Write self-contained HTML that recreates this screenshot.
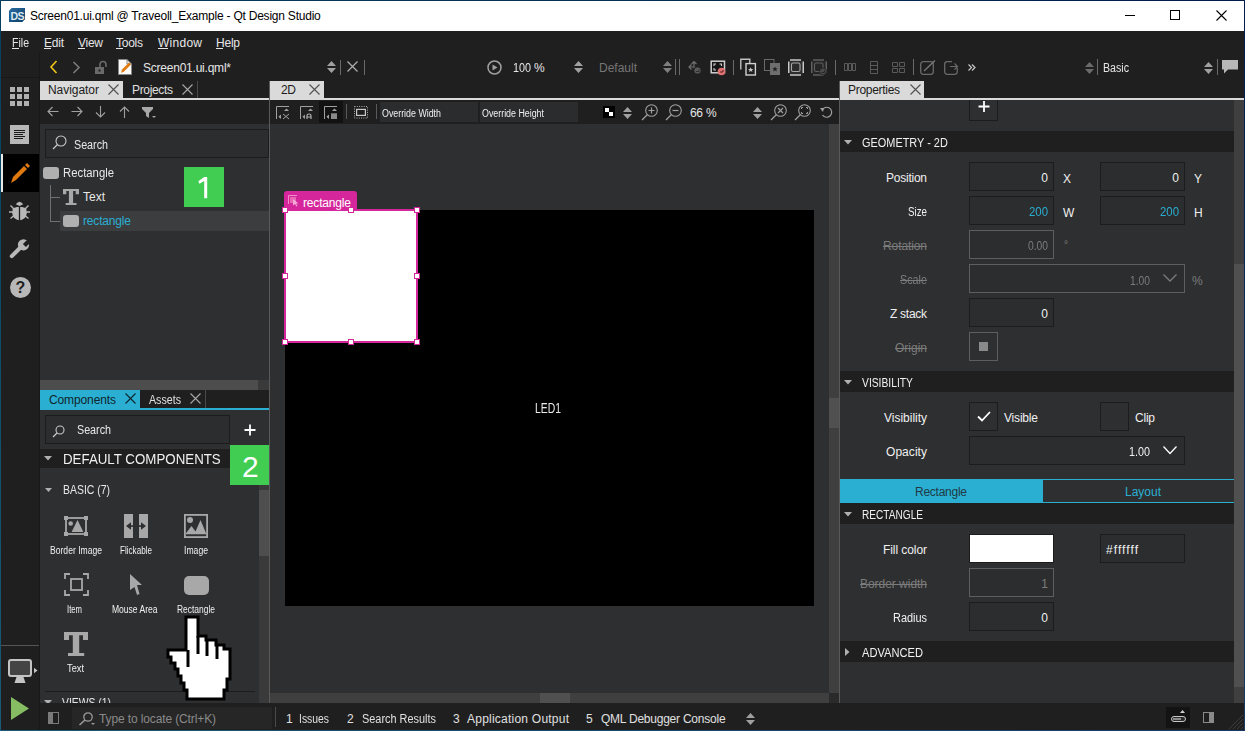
<!DOCTYPE html>
<html><head><meta charset="utf-8">
<style>
*{margin:0;padding:0;box-sizing:border-box}
html,body{width:1245px;height:731px;overflow:hidden;background:#1f1f1f}
body{position:relative;font-family:"Liberation Sans",sans-serif;font-size:12px;color:#fff}
.a{position:absolute}
.t{position:absolute;white-space:nowrap;line-height:1;font-family:"Liberation Sans",sans-serif}
svg.a{overflow:visible}
</style></head><body>
<div class="a" style="left:0px;top:0px;width:1245px;height:1px;background:linear-gradient(to right,#053f5f,#001c4c);"></div>
<div class="a" style="left:0px;top:730px;width:1245px;height:1px;background:linear-gradient(to right,#185a78,#1a3a66);"></div>
<div class="a" style="left:0px;top:0px;width:1px;height:731px;background:linear-gradient(#053f5f,#185a78);"></div>
<div class="a" style="left:1244px;top:0px;width:1px;height:731px;background:linear-gradient(#001c4c,#1a3a66);"></div>
<div class="a" style="left:1px;top:1px;width:1243px;height:30px;background:#ffffff;"></div>
<div class="a" style="left:1px;top:31px;width:1243px;height:672px;background:#1f1f1f;"></div>
<div class="a" style="left:1px;top:703px;width:1243px;height:27px;background:#1f1f1f;"></div>
<svg class="a" style="left:9px;top:8px;" width="17" height="14" viewBox="0 0 17 14"><path d="M3 0H16V11L13 14H0V3Z" fill="#1a5a8c"/><path d="M3 0H16V11L13 14H0V3Z" fill="url(#g1)"/><defs><linearGradient id="g1" x1="0" y1="0" x2="1" y2="1"><stop offset="0" stop-color="#2a6da0"/><stop offset="1" stop-color="#0d3f66"/></linearGradient></defs><text x="1.5" y="12" font-family="Liberation Sans" font-weight="bold" font-size="10.5" fill="#dbe8f2" letter-spacing="-0.6">DS</text></svg>
<div class="t" style="left:30.0px;top:10px;font-size:12px;color:#000;font-weight:normal;letter-spacing:-0.222px;">Screen01.ui.qml @ Traveoll_Example - Qt Design Studio</div>
<div class="a" style="left:1125px;top:15px;width:10px;height:1px;background:#000;"></div>
<div class="a" style="left:1170px;top:10px;width:10px;height:10px;border:1px solid #000;background:transparent;"></div>
<svg class="a" style="left:1216px;top:10px;" width="11" height="11" viewBox="0 0 11 11"><path d="M0.5 0.5L10.5 10.5M10.5 0.5L0.5 10.5" stroke="#000" stroke-width="1.1"/></svg>
<div class="t" style="left:12.0px;top:37px;font-size:12px;color:#e6e6e6;font-weight:normal;letter-spacing:0.000px;transform:scaleX(0.8792);transform-origin:0 0;">File</div>
<div class="a" style="left:12px;top:48px;width:7px;height:1px;background:#e6e6e6;"></div>
<div class="t" style="left:44.0px;top:37px;font-size:12px;color:#e6e6e6;font-weight:normal;letter-spacing:-0.226px;">Edit</div>
<div class="a" style="left:44px;top:48px;width:7px;height:1px;background:#e6e6e6;"></div>
<div class="t" style="left:78.0px;top:37px;font-size:12px;color:#e6e6e6;font-weight:normal;letter-spacing:-0.264px;">View</div>
<div class="a" style="left:78px;top:48px;width:7px;height:1px;background:#e6e6e6;"></div>
<div class="t" style="left:116.0px;top:37px;font-size:12px;color:#e6e6e6;font-weight:normal;letter-spacing:-0.253px;">Tools</div>
<div class="a" style="left:116px;top:48px;width:7px;height:1px;background:#e6e6e6;"></div>
<div class="t" style="left:158.0px;top:37px;font-size:12px;color:#e6e6e6;font-weight:normal;letter-spacing:0.264px;">Window</div>
<div class="a" style="left:158px;top:48px;width:10px;height:1px;background:#e6e6e6;"></div>
<div class="t" style="left:216.0px;top:37px;font-size:12px;color:#e6e6e6;font-weight:normal;letter-spacing:-0.227px;">Help</div>
<div class="a" style="left:216px;top:48px;width:7px;height:1px;background:#e6e6e6;"></div>
<div class="a" style="left:39px;top:53px;width:1px;height:677px;background:#181818;"></div>
<div class="a" style="left:1px;top:77px;width:38px;height:1px;background:#181818;"></div>
<div class="a" style="left:10px;top:87px;width:5px;height:5px;background:#b0b0b0;"></div>
<div class="a" style="left:17px;top:87px;width:5px;height:5px;background:#b0b0b0;"></div>
<div class="a" style="left:24px;top:87px;width:5px;height:5px;background:#b0b0b0;"></div>
<div class="a" style="left:10px;top:94px;width:5px;height:5px;background:#b0b0b0;"></div>
<div class="a" style="left:17px;top:94px;width:5px;height:5px;background:#b0b0b0;"></div>
<div class="a" style="left:24px;top:94px;width:5px;height:5px;background:#b0b0b0;"></div>
<div class="a" style="left:10px;top:101px;width:5px;height:5px;background:#b0b0b0;"></div>
<div class="a" style="left:17px;top:101px;width:5px;height:5px;background:#b0b0b0;"></div>
<div class="a" style="left:24px;top:101px;width:5px;height:5px;background:#b0b0b0;"></div>
<div class="a" style="left:10px;top:125px;width:19px;height:19px;background:#b8b8b8;"></div>
<div class="a" style="left:14px;top:130px;width:11px;height:1px;background:#1a1a1a;"></div>
<div class="a" style="left:14px;top:132px;width:11px;height:1px;background:#1a1a1a;"></div>
<div class="a" style="left:14px;top:134px;width:9px;height:1px;background:#1a1a1a;"></div>
<div class="a" style="left:14px;top:136px;width:11px;height:1px;background:#1a1a1a;"></div>
<div class="a" style="left:14px;top:138px;width:9px;height:1px;background:#1a1a1a;"></div>
<div class="a" style="left:1px;top:154px;width:38px;height:38px;background:#000;"></div>
<div class="a" style="left:1px;top:154px;width:2px;height:38px;background:#e8e8e8;"></div>
<svg class="a" style="left:9px;top:162px;" width="21" height="22" viewBox="0 0 21 22"><path d="M2 21 L4 15 L15 4 L18 7 L7 18 Z" fill="#e07a10"/><path d="M16 3 L18 1 L21 4 L19 6Z" fill="#e07a10"/></svg>
<svg class="a" style="left:9px;top:200px;" width="21" height="21" viewBox="0 0 21 21"><path d="M1.5 5.5L4.5 8.5M19.5 5.5L16.5 8.5M0 12H4M21 12H17M1.5 18.5L4.5 16M19.5 18.5L16.5 16" stroke="#b8b8b8" stroke-width="1.4"/><path d="M10.5 6.3L3.8 8.2Q2.6 13 4 16.5Q7 20.3 10.5 20.3Q14 20.3 17 16.5Q18.4 13 17.2 8.2Z" fill="#b8b8b8"/><path d="M6.8 4.3Q10.5 -0.8 14.2 4.3L10.5 6Z" fill="#b8b8b8"/><path d="M10.5 6.2V21" stroke="#1f1f1f" stroke-width="1.3"/><path d="M5.5 6.3L10.5 6.6L15.5 6.3" fill="none" stroke="#1f1f1f" stroke-width="0.9"/></svg>
<svg class="a" style="left:9px;top:239px;" width="21" height="20" viewBox="0 0 21 20"><defs><mask id="wm"><rect x="-2" y="-2" width="25" height="24" fill="#fff"/><path d="M13.9 5.1L16.9 8.1L22.5 2.5L19.5 -0.5Z" fill="#000"/></mask></defs><g mask="url(#wm)"><circle cx="14.5" cy="5.8" r="5.6" fill="#b8b8b8"/></g><path d="M2.8 17.2L11.5 8.5" stroke="#b8b8b8" stroke-width="4" stroke-linecap="round"/></svg>
<svg class="a" style="left:10px;top:277px;" width="21" height="21" viewBox="0 0 21 21"><circle cx="10.5" cy="10.5" r="10.5" fill="#b8b8b8"/><text x="10.5" y="16" text-anchor="middle" font-family="Liberation Sans" font-weight="bold" font-size="16" fill="#1f1f1f">?</text></svg>
<div class="a" style="left:1px;top:645px;width:38px;height:1px;background:#555;"></div>
<svg class="a" style="left:8px;top:659px;" width="31" height="25" viewBox="0 0 31 25"><rect x="1" y="1" width="22" height="16" rx="2" fill="#444" stroke="#c4c4c4" stroke-width="2"/><path d="M6.5 24L8.5 18H15.5L17.5 24Z" fill="#c4c4c4"/><path d="M26 8.8L29.5 11.5L26 14.3Z" fill="#c4c4c4"/></svg>
<svg class="a" style="left:10px;top:697px;" width="20" height="23" viewBox="0 0 20 23"><path d="M1 0 L19 11.5 L1 23Z" fill="#86bd63"/></svg>
<svg class="a" style="left:49px;top:60px;" width="9" height="14" viewBox="0 0 9 14"><path d="M7.5 1 L2 7 L7.5 13" fill="none" stroke="#f0c419" stroke-width="1.6"/></svg>
<svg class="a" style="left:72px;top:61px;" width="9" height="13" viewBox="0 0 9 13"><path d="M1.5 1 L7 6.5 L1.5 12" fill="none" stroke="#7a7a7a" stroke-width="1.6"/></svg>
<svg class="a" style="left:95px;top:61px;" width="14" height="13" viewBox="0 0 14 13"><rect x="0" y="6" width="9" height="7" fill="#6a6a6a"/><path d="M5 6V3.5A3 3 0 0 1 11 3.5V6" fill="none" stroke="#6a6a6a" stroke-width="1.6"/><rect x="3.5" y="8.5" width="2" height="2" fill="#1f1f1f"/></svg>
<svg class="a" style="left:118px;top:59px;" width="15" height="16" viewBox="0 0 15 16"><path d="M0.5 0.5H9L13.5 5V15.5H0.5Z" fill="#fafafa" stroke="#888" stroke-width="1"/><path d="M9 0.5V5H13.5" fill="none" stroke="#888"/><path d="M3 14 L4 10.5 L11 3.5 L13 5.5 L6 12.5Z" fill="#e07a10"/></svg>
<div class="t" style="left:143.0px;top:62px;font-size:12px;color:#e6e6e6;font-weight:normal;letter-spacing:-0.226px;">Screen01.ui.qml*</div>
<svg class="a" style="left:327px;top:61px;" width="9" height="12" viewBox="0 0 9 12"><path d="M4.5 0 L9 5 H0Z M4.5 12 L9 7 H0Z" fill="#a0a0a0"/></svg>
<div class="a" style="left:340px;top:60px;width:1px;height:15px;background:#6a6a6a;"></div>
<svg class="a" style="left:347px;top:61px;" width="11" height="11" viewBox="0 0 11 11"><path d="M0.5 0.5L10.5 10.5M10.5 0.5L0.5 10.5" stroke="#b0b0b0" stroke-width="1.2"/></svg>
<div class="a" style="left:364px;top:60px;width:1px;height:15px;background:#6a6a6a;"></div>
<svg class="a" style="left:487px;top:60px;" width="15" height="15" viewBox="0 0 15 15"><circle cx="7.5" cy="7.5" r="6.5" fill="none" stroke="#a0a0a0" stroke-width="1.5"/><path d="M5.5 4.5 L10.5 7.5 L5.5 10.5Z" fill="#a0a0a0"/></svg>
<div class="t" style="left:513.0px;top:62px;font-size:12px;color:#e6e6e6;font-weight:normal;letter-spacing:0.000px;transform:scaleX(0.8990);transform-origin:0 0;">100</div>
<div class="t" style="left:534.0px;top:62px;font-size:12px;color:#e6e6e6;font-weight:normal;letter-spacing:-1.670px;">%</div>
<svg class="a" style="left:574px;top:61px;" width="9" height="12" viewBox="0 0 9 12"><path d="M4.5 0 L9 5 H0Z M4.5 12 L9 7 H0Z" fill="#a0a0a0"/></svg>
<div class="t" style="left:599.0px;top:62px;font-size:12px;color:#767676;font-weight:normal;letter-spacing:-0.004px;">Default</div>
<svg class="a" style="left:663px;top:61px;" width="9" height="12" viewBox="0 0 9 12"><path d="M4.5 0 L9 5 H0Z M4.5 12 L9 7 H0Z" fill="#808080"/></svg>
<div class="a" style="left:675px;top:59px;width:1px;height:16px;background:#6a6a6a;"></div>
<div class="a" style="left:679px;top:59px;width:1px;height:16px;background:#6a6a6a;"></div>
<svg class="a" style="left:688px;top:60px;" width="14" height="15" viewBox="0 0 14 15"><path d="M6 8V1.5M3.5 4L6 1.5L8.5 4M5.5 7H1M3.5 4.5L1 7L3.5 9.5" fill="none" stroke="#6e6e6e" stroke-width="1.2"/><circle cx="9.5" cy="10.5" r="3.6" fill="#5a5a5a" stroke="#1f1f1f" stroke-width="0.8"/><path d="M8 11.5H11V9.5" fill="none" stroke="#2a2a2a" stroke-width="0.9"/></svg>
<svg class="a" style="left:710px;top:60px;" width="16" height="16" viewBox="0 0 16 16"><rect x="1.2" y="1.2" width="13.3" height="11.6" fill="#161616" stroke="#d0d0d0" stroke-width="1.5"/><path d="M4 6V4H6M9.5 4H11.5V6M4 8V10H6" fill="none" stroke="#d0d0d0" stroke-width="1.1"/><circle cx="11.5" cy="11.5" r="3.8" fill="#e07272"/><path d="M10 12H13V10" fill="none" stroke="#5a2020" stroke-width="1"/></svg>
<div class="a" style="left:733px;top:60px;width:1px;height:15px;background:#6a6a6a;"></div>
<svg class="a" style="left:740px;top:58px;" width="17" height="18" viewBox="0 0 17 18"><path d="M0.8 11.5V1.2H9.8V5" fill="none" stroke="#c0c0c0" stroke-width="1.4"/><rect x="6" y="5.6" width="9.4" height="11.4" fill="#1f1f1f" stroke="#d0d0d0" stroke-width="1.4"/><path d="M10.7 9.2l.8 1.8h1.9l-1.5 1.2.6 1.9-1.8-1.1-1.8 1.1.6-1.9-1.5-1.2h1.9z" fill="#c8c8c8"/></svg>
<svg class="a" style="left:764px;top:58px;" width="17" height="18" viewBox="0 0 17 18"><rect x="0.5" y="1.5" width="9.5" height="11" fill="none" stroke="#6a6a6a"/><rect x="6" y="5" width="10" height="12" fill="#6e6e6e"/><path d="M11 8.5l.8 1.8h1.9l-1.5 1.2.6 1.9-1.8-1.1-1.8 1.1.6-1.9-1.5-1.2h1.9z" fill="#1f1f1f"/></svg>
<svg class="a" style="left:788px;top:59px;" width="16" height="17" viewBox="0 0 16 17"><rect x="1.5" y="1.5" width="13" height="14" fill="#2e2e2e"/><path d="M2 1H13M2 16H13M0.75 2.5V14M15.25 2.5V14" stroke="#c8c8c8" stroke-width="1.5"/><rect x="3.5" y="4" width="8.5" height="8.5" rx="1.5" fill="#2a2a2a" stroke="#a8a8a8" stroke-width="1.1"/></svg>
<svg class="a" style="left:811px;top:59px;" width="17" height="17" viewBox="0 0 17 17"><rect x="1.5" y="1.5" width="13" height="14" fill="#262626"/><path d="M2 1H13M2 16H13M0.75 2.5V14M15.25 2.5V14" stroke="#606060" stroke-width="1.5"/><rect x="3.5" y="4" width="8.5" height="8.5" rx="1.5" fill="none" stroke="#606060" stroke-width="1.1"/><circle cx="12" cy="12.5" r="3.6" fill="#4a4a4a" stroke="#1f1f1f" stroke-width="0.8"/><path d="M10.5 13.5H13.5V11.5" fill="none" stroke="#222" stroke-width="0.9"/></svg>
<div class="a" style="left:835px;top:60px;width:1px;height:15px;background:#6a6a6a;"></div>
<svg class="a" style="left:844px;top:63px;" width="13" height="8" viewBox="0 0 13 8"><path d="M0.5 0.5h3v7h-3zM4.5 0.5h3v7h-3zM8.5 0.5h3v7h-3z" fill="none" stroke="#5a5a5a"/></svg>
<svg class="a" style="left:870px;top:61px;" width="8" height="13" viewBox="0 0 8 13"><path d="M0.5 0.5h7v12h-7zM0.5 4.5h7M0.5 8.5h7" fill="none" stroke="#5a5a5a"/></svg>
<svg class="a" style="left:892px;top:62px;" width="13" height="11" viewBox="0 0 13 11"><path d="M0.5 0.5h5v4h-5zM7.5 0.5h5v4h-5zM0.5 6.5h5v4h-5zM7.5 6.5h5v4h-5z" fill="none" stroke="#5a5a5a"/></svg>
<div class="a" style="left:913px;top:59px;width:1px;height:16px;background:#6a6a6a;"></div>
<svg class="a" style="left:920px;top:60px;" width="16" height="15" viewBox="0 0 16 15"><rect x="0.7" y="1.7" width="12.6" height="12.6" rx="2.5" fill="none" stroke="#6a6a6a" stroke-width="1.3"/><path d="M4 11L15 0.5" stroke="#7a7a7a" stroke-width="1.3"/></svg>
<svg class="a" style="left:944px;top:60px;" width="15" height="15" viewBox="0 0 15 15"><path d="M8 1.7H3.2A2.5 2.5 0 0 0 0.7 4.2V11.8A2.5 2.5 0 0 0 3.2 14.3H10.8A2.5 2.5 0 0 0 13.3 11.8V8" fill="none" stroke="#6a6a6a" stroke-width="1.3"/><path d="M6 6.5H13M10.5 3.5L13.5 6.5L10.5 9.5" fill="none" stroke="#6a6a6a" stroke-width="1.2"/></svg>
<svg class="a" style="left:968px;top:64px;" width="8" height="8" viewBox="0 0 8 8"><path d="M0.5 0.5L3.5 3.5L0.5 6.5M4 0.5L7 3.5L4 6.5" fill="none" stroke="#c8c8c8" stroke-width="1.2"/></svg>
<svg class="a" style="left:1085px;top:62px;" width="9" height="12" viewBox="0 0 9 12"><path d="M4.5 0 L9 5 H0Z M4.5 12 L9 7 H0Z" fill="#6a6a6a"/></svg>
<div class="a" style="left:1097px;top:59px;width:1px;height:16px;background:#6a6a6a;"></div>
<div class="t" style="left:1103.0px;top:62px;font-size:12px;color:#e6e6e6;font-weight:normal;letter-spacing:0.000px;transform:scaleX(0.8860);transform-origin:0 0;">Basic</div>
<svg class="a" style="left:1204px;top:62px;" width="9" height="12" viewBox="0 0 9 12"><path d="M4.5 0 L9 5 H0Z M4.5 12 L9 7 H0Z" fill="#a0a0a0"/></svg>
<div class="a" style="left:1217px;top:59px;width:1px;height:16px;background:#6a6a6a;"></div>
<svg class="a" style="left:1222px;top:60px;" width="17" height="14" viewBox="0 0 17 14"><path d="M0 0H16V9.5H6L2 13.5V9.5H0Z" fill="#b8b8b8"/></svg>
<div class="a" style="left:40px;top:81px;width:83px;height:17px;background:#dadada;"></div>
<div class="t" style="left:48.0px;top:84px;font-size:12px;color:#1a1a1a;font-weight:normal;letter-spacing:-0.045px;">Navigator</div>
<svg class="a" style="left:108px;top:84px;" width="11" height="11" viewBox="0 0 11 11"><path d="M0.5 0.5L10.5 10.5M10.5 0.5L0.5 10.5" stroke="#505050" stroke-width="1.1"/></svg>
<div class="t" style="left:132.0px;top:84px;font-size:12px;color:#e0e0e0;font-weight:normal;letter-spacing:-0.335px;">Projects</div>
<svg class="a" style="left:182px;top:84px;" width="11" height="11" viewBox="0 0 11 11"><path d="M0.5 0.5L10.5 10.5M10.5 0.5L0.5 10.5" stroke="#a8a8a8" stroke-width="1.1"/></svg>
<div class="a" style="left:197px;top:81px;width:1px;height:17px;background:#4a4a4a;"></div>
<div class="a" style="left:40px;top:98px;width:229px;height:2px;background:#dadada;"></div>
<div class="a" style="left:270px;top:81px;width:54px;height:17px;background:#dadada;"></div>
<div class="t" style="left:281.0px;top:84px;font-size:12px;color:#1a1a1a;font-weight:normal;letter-spacing:-0.340px;">2D</div>
<svg class="a" style="left:309px;top:84px;" width="11" height="11" viewBox="0 0 11 11"><path d="M0.5 0.5L10.5 10.5M10.5 0.5L0.5 10.5" stroke="#505050" stroke-width="1.1"/></svg>
<div class="a" style="left:270px;top:98px;width:569px;height:2px;background:#dadada;"></div>
<div class="a" style="left:840px;top:81px;width:84px;height:17px;background:#dadada;"></div>
<div class="t" style="left:848.0px;top:84px;font-size:12px;color:#1a1a1a;font-weight:normal;letter-spacing:-0.299px;">Properties</div>
<svg class="a" style="left:910px;top:84px;" width="11" height="11" viewBox="0 0 11 11"><path d="M0.5 0.5L10.5 10.5M10.5 0.5L0.5 10.5" stroke="#505050" stroke-width="1.1"/></svg>
<div class="a" style="left:840px;top:98px;width:404px;height:2px;background:#dadada;"></div>
<div class="a" style="left:40px;top:124px;width:229px;height:256px;background:#2e2f30;"></div>
<svg class="a" style="left:47px;top:106px;" width="12" height="11" viewBox="0 0 12 11"><path d="M11.5 5.5H1M5.5 1L1 5.5L5.5 10" fill="none" stroke="#a0a0a0" stroke-width="1.1"/></svg>
<svg class="a" style="left:71px;top:106px;" width="12" height="11" viewBox="0 0 12 11"><path d="M0.5 5.5H11M6.5 1L11 5.5L6.5 10" fill="none" stroke="#a0a0a0" stroke-width="1.1"/></svg>
<svg class="a" style="left:95px;top:106px;" width="11" height="12" viewBox="0 0 11 12"><path d="M5.5 0V11M1 6.5L5.5 11L10 6.5" fill="none" stroke="#a0a0a0" stroke-width="1.1"/></svg>
<svg class="a" style="left:119px;top:106px;" width="11" height="12" viewBox="0 0 11 12"><path d="M5.5 12V1M1 5.5L5.5 1L10 5.5" fill="none" stroke="#a0a0a0" stroke-width="1.1"/></svg>
<svg class="a" style="left:142px;top:107px;" width="15" height="11" viewBox="0 0 15 11"><path d="M0 0H11V2L7 6V11L4 9V6L0 2Z" fill="#a8a8a8"/><path d="M10 9H14L12 11Z" fill="#a8a8a8"/></svg>
<div class="a" style="left:45px;top:129px;width:224px;height:29px;border:1px solid #1c1c1c;background:#2c2d2e;"></div>
<svg class="a" style="left:52px;top:135px;" width="15" height="15" viewBox="0 0 15 15"><circle cx="9" cy="6" r="5" fill="none" stroke="#c8c8c8" stroke-width="1.1"/><path d="M5.5 9.5L1 14" stroke="#c8c8c8" stroke-width="1.2"/></svg>
<div class="t" style="left:74.0px;top:139px;font-size:12px;color:#e8e8e8;font-weight:normal;letter-spacing:0.000px;transform:scaleX(0.8942);transform-origin:0 0;">Search</div>
<svg class="a" style="left:43px;top:167px;" width="16" height="12" viewBox="0 0 16 12"><rect x="0" y="0" width="16" height="12" rx="3" fill="#b0b0b0"/></svg>
<div class="t" style="left:63.0px;top:167px;font-size:12px;color:#e8e8e8;font-weight:normal;letter-spacing:0.000px;transform:scaleX(0.9438);transform-origin:0 0;">Rectangle</div>
<div class="a" style="left:50px;top:185px;width:1px;height:36px;background:#707070;"></div>
<div class="a" style="left:50px;top:197px;width:10px;height:1px;background:#707070;"></div>
<div class="a" style="left:50px;top:221px;width:10px;height:1px;background:#707070;"></div>
<div class="a" style="left:60px;top:211px;width:209px;height:20px;background:#3c3d3e;"></div>
<svg class="a" style="left:63px;top:189px;" width="16" height="16" viewBox="0 0 16 16"><path d="M0 0H16V5.3H12.7V2.1H10.1V14H13.5V16H2.7V14H5.9V2.1H3.3V5.3H0Z" fill="#a8a8a8"/></svg>
<div class="t" style="left:83.0px;top:191px;font-size:12px;color:#e8e8e8;font-weight:normal;letter-spacing:-0.003px;">Text</div>
<svg class="a" style="left:63px;top:215px;" width="16" height="12" viewBox="0 0 16 12"><rect x="0" y="0" width="16" height="12" rx="3" fill="#b0b0b0"/></svg>
<div class="t" style="left:83.0px;top:215px;font-size:12px;color:#2aafd3;font-weight:normal;letter-spacing:-0.171px;">rectangle</div>
<div class="a" style="left:184px;top:167px;width:40px;height:40px;background:#41cd52"></div>
<svg class="a" style="left:195px;top:175px;" width="15" height="25" viewBox="0 0 15 25"><path d="M9.2 2H12.2V23.2H9.2V5.9L4.4 8.8L3.3 6.3Z" fill="#fff"/></svg>
<div class="a" style="left:40px;top:380px;width:218px;height:10px;background:#4d4d4d;"></div>
<div class="a" style="left:258px;top:380px;width:11px;height:10px;background:#3a3a3a;"></div>
<div class="a" style="left:40px;top:390px;width:229px;height:18px;background:#1f1f1f;"></div>
<div class="a" style="left:40px;top:390px;width:100px;height:18px;background:#2aafd3;"></div>
<div class="t" style="left:49.0px;top:394px;font-size:12px;color:#10252c;font-weight:normal;letter-spacing:-0.115px;">Components</div>
<svg class="a" style="left:125px;top:393px;" width="11" height="11" viewBox="0 0 11 11"><path d="M0.5 0.5L10.5 10.5M10.5 0.5L0.5 10.5" stroke="#10252c" stroke-width="1.1"/></svg>
<div class="t" style="left:149.0px;top:394px;font-size:12px;color:#e0e0e0;font-weight:normal;letter-spacing:0.000px;transform:scaleX(0.8886);transform-origin:0 0;">Assets</div>
<svg class="a" style="left:190px;top:393px;" width="11" height="11" viewBox="0 0 11 11"><path d="M0.5 0.5L10.5 10.5M10.5 0.5L0.5 10.5" stroke="#a8a8a8" stroke-width="1.1"/></svg>
<div class="a" style="left:205px;top:390px;width:1px;height:18px;background:#4a4a4a;"></div>
<div class="a" style="left:40px;top:408px;width:229px;height:2px;background:#2aafd3;"></div>
<div class="a" style="left:40px;top:410px;width:229px;height:293px;background:#2e2f30;"></div>
<div class="a" style="left:45px;top:415px;width:185px;height:29px;border:1px solid #1c1c1c;background:#2c2d2e;"></div>
<svg class="a" style="left:52px;top:425px;" width="13" height="12" viewBox="0 0 13 12"><circle cx="8" cy="5" r="4" fill="none" stroke="#c8c8c8" stroke-width="1.1"/><path d="M5 8L1 12" stroke="#c8c8c8" stroke-width="1.2"/></svg>
<div class="t" style="left:77.0px;top:424px;font-size:12px;color:#e8e8e8;font-weight:normal;letter-spacing:0.000px;transform:scaleX(0.8942);transform-origin:0 0;">Search</div>
<svg class="a" style="left:244px;top:424px;" width="12" height="12" viewBox="0 0 12 12"><path d="M6 0.5V11.5M0.5 6H11.5" stroke="#fff" stroke-width="1.8"/></svg>
<div class="a" style="left:40px;top:449px;width:190px;height:19px;background:#1f1f1f;"></div>
<svg class="a" style="left:44px;top:456px;" width="8" height="5" viewBox="0 0 8 5"><path d="M0 0H8L4 4.5Z" fill="#b0b0b0"/></svg>
<div class="t" style="left:63.0px;top:452px;font-size:14px;color:#f0f0f0;font-weight:normal;letter-spacing:0.000px;transform:scaleX(0.9506);transform-origin:0 0;">DEFAULT COMPONENTS</div>
<div class="a" style="left:230px;top:445px;width:40px;height:40px;background:#41cd52;"></div>
<div class="t" style="left:242.0px;top:452px;font-size:30px;color:#fff;font-weight:normal;letter-spacing:-2.685px;">2</div>
<div class="a" style="left:259px;top:485px;width:10px;height:5px;background:#3a3a3a;"></div>
<div class="a" style="left:259px;top:490px;width:10px;height:66px;background:#4e4e4e;"></div>
<div class="a" style="left:259px;top:556px;width:10px;height:147px;background:#3a3a3a;"></div>
<svg class="a" style="left:45px;top:488px;" width="8" height="5" viewBox="0 0 8 5"><path d="M0 0H7L3.5 4Z" fill="#b0b0b0"/></svg>
<div class="t" style="left:63.0px;top:484px;font-size:12px;color:#e8e8e8;font-weight:normal;letter-spacing:0.000px;transform:scaleX(0.8702);transform-origin:0 0;">BASIC (7)</div>
<svg class="a" style="left:64px;top:516px;" width="24" height="20" viewBox="0 0 24 20"><rect x="2" y="2" width="20" height="16" fill="none" stroke="#a8a8a8" stroke-width="1.8"/><rect x="0" y="0" width="4" height="4" fill="#a8a8a8"/><rect x="20" y="0" width="4" height="4" fill="#a8a8a8"/><rect x="0" y="16" width="4" height="4" fill="#a8a8a8"/><rect x="20" y="16" width="4" height="4" fill="#a8a8a8"/><circle cx="6.7" cy="7.5" r="2.3" fill="#a8a8a8"/><path d="M7.6 16L13.5 4L19.4 16Z" fill="#a8a8a8"/></svg>
<div class="t" style="left:50.0px;top:546px;font-size:10px;color:#f0f0f0;font-weight:normal;letter-spacing:0.000px;transform:scaleX(0.8583);transform-origin:0 0;">Border Image</div>
<svg class="a" style="left:124px;top:514px;" width="24" height="24" viewBox="0 0 24 24"><rect x="0" y="0" width="9" height="24" fill="#a8a8a8"/><rect x="15" y="0" width="9" height="24" fill="#a8a8a8"/><path d="M2 12L7 8.2V15.8Z M22 12L17 8.2V15.8Z" fill="#2e2f30"/><rect x="6.5" y="11.2" width="2.5" height="1.7" fill="#2e2f30"/><rect x="15" y="11.2" width="2.5" height="1.7" fill="#2e2f30"/></svg>
<div class="t" style="left:120.0px;top:546px;font-size:10px;color:#f0f0f0;font-weight:normal;letter-spacing:0.000px;transform:scaleX(0.8110);transform-origin:0 0;">Flickable</div>
<svg class="a" style="left:184px;top:514px;" width="24" height="24" viewBox="0 0 24 24"><rect x="0.9" y="0.9" width="22.2" height="22.2" fill="none" stroke="#a8a8a8" stroke-width="1.8"/><circle cx="6" cy="6" r="3" fill="#a8a8a8"/><path d="M1.8 19.5L7.5 12L11.5 17.5L16.5 6L22.2 19.5V20.3H1.8Z" fill="#a8a8a8"/></svg>
<div class="t" style="left:184.0px;top:546px;font-size:10px;color:#f0f0f0;font-weight:normal;letter-spacing:0.000px;transform:scaleX(0.8635);transform-origin:0 0;">Image</div>
<svg class="a" style="left:64px;top:573px;" width="25" height="23" viewBox="0 0 25 23"><path d="M1 6V1H6M19 1H24V6M24 17V22H19M6 22H1V17" fill="none" stroke="#a8a8a8" stroke-width="1.8"/><rect x="7" y="6" width="11" height="11" fill="none" stroke="#a8a8a8" stroke-width="1.8"/></svg>
<div class="t" style="left:67.0px;top:605px;font-size:10px;color:#f0f0f0;font-weight:normal;letter-spacing:0.000px;transform:scaleX(0.7713);transform-origin:0 0;">Item</div>
<svg class="a" style="left:130px;top:574px;" width="13" height="22" viewBox="0 0 13 22"><path d="M0 0L12 11H7L9.5 20L7 21L4.5 13L0 16Z" fill="#a8a8a8"/></svg>
<div class="t" style="left:112.0px;top:605px;font-size:10px;color:#f0f0f0;font-weight:normal;letter-spacing:0.000px;transform:scaleX(0.8532);transform-origin:0 0;">Mouse Area</div>
<svg class="a" style="left:184px;top:576px;" width="25" height="19" viewBox="0 0 25 19"><rect x="0" y="0" width="25" height="19" rx="5" fill="#a8a8a8"/></svg>
<div class="t" style="left:177.0px;top:605px;font-size:10px;color:#f0f0f0;font-weight:normal;letter-spacing:0.000px;transform:scaleX(0.8439);transform-origin:0 0;">Rectangle</div>
<svg class="a" style="left:64px;top:632px;" width="24" height="24" viewBox="0 0 24 24"><path d="M0 0H24V8H19V3.2H15.2V21H20.2V24H4V21H8.8V3.2H5V8H0Z" fill="#a8a8a8"/></svg>
<div class="t" style="left:67.0px;top:664px;font-size:10px;color:#f0f0f0;font-weight:normal;letter-spacing:0.000px;transform:scaleX(0.9269);transform-origin:0 0;">Text</div>
<div class="a" style="left:45px;top:691px;width:210px;height:1px;background:#1c1c1c;"></div>
<svg class="a" style="left:44px;top:700px;" width="8" height="5" viewBox="0 0 8 5"><path d="M0 0H8L4 4.5Z" fill="#b0b0b0"/></svg>
<div class="t" style="left:62.0px;top:697px;font-size:12px;color:#e8e8e8;font-weight:normal;letter-spacing:0.000px;transform:scaleX(0.8646);transform-origin:0 0;">VIEWS (1)</div>
<div class="a" style="left:269px;top:81px;width:1px;height:622px;background:#5a5a5a;"></div>
<div class="a" style="left:270px;top:124px;width:559px;height:569px;background:#2e2f30;"></div>
<div class="a" style="left:829px;top:124px;width:10px;height:569px;background:#3f3f3f;"></div>
<div class="a" style="left:829px;top:398px;width:10px;height:30px;background:#505050;"></div>
<div class="a" style="left:270px;top:693px;width:559px;height:10px;background:#3f3f3f;"></div>
<div class="a" style="left:540px;top:693px;width:30px;height:10px;background:#505050;"></div>
<div class="a" style="left:829px;top:693px;width:10px;height:10px;background:#2a2a2a;"></div>
<div class="a" style="left:839px;top:81px;width:1px;height:622px;background:#5a5a5a;"></div>
<svg class="a" style="left:276px;top:106px;" width="14" height="14" viewBox="0 0 14 14"><path d="M0.5 13V0.5H13" fill="none" stroke="#a0a0a0"/><path d="M8 5H13L10.5 2.5Z" fill="#a0a0a0"/><path d="M5 8.6V13L2.4 10.8Z" fill="#a0a0a0"/><path d="M7 8L13 13M13 8L7 13" stroke="#a0a0a0"/></svg>
<svg class="a" style="left:300px;top:106px;" width="14" height="14" viewBox="0 0 14 14"><path d="M0.5 13V0.5H13" fill="none" stroke="#a0a0a0"/><path d="M8 5H13L10.5 2.5Z" fill="#a0a0a0"/><path d="M5 8.6V13L2.4 10.8Z" fill="#a0a0a0"/><path d="M7 13V9.5Q7 8 9 8Q11 8 11 9.5V13M7 11H11" fill="none" stroke="#b0b0b0" stroke-width="1.2"/></svg>
<div class="a" style="left:319px;top:101px;width:24px;height:22px;background:#121212;"></div>
<svg class="a" style="left:324px;top:106px;" width="14" height="14" viewBox="0 0 14 14"><path d="M0.5 13V0.5H13" fill="none" stroke="#a0a0a0"/><path d="M8 5H13L10.5 2.5Z" fill="#a0a0a0"/><path d="M5 8.6V13L2.4 10.8Z" fill="#a0a0a0"/><rect x="7" y="7.3" width="6" height="5.7" fill="#8a8a8a"/></svg>
<div class="a" style="left:346px;top:104px;width:1px;height:15px;background:#5a5a5a;"></div>
<svg class="a" style="left:354px;top:106px;" width="14" height="13" viewBox="0 0 14 13"><rect x="0.5" y="0.5" width="13" height="11.5" fill="none" stroke="#b0b0b0" stroke-dasharray="1 1.3"/><rect x="2.6" y="3.4" width="8.8" height="6" fill="none" stroke="#c8c8c8" stroke-width="1.2"/></svg>
<div class="a" style="left:376px;top:104px;width:1px;height:15px;background:#5a5a5a;"></div>
<div class="a" style="left:380px;top:102px;width:98px;height:20px;background:#2b2c2d;"></div>
<div class="t" style="left:382.0px;top:109px;font-size:10px;color:#f0f0f0;font-weight:normal;letter-spacing:0.000px;transform:scaleX(0.8848);transform-origin:0 0;">Override Width</div>
<div class="a" style="left:480px;top:102px;width:98px;height:20px;background:#2b2c2d;"></div>
<div class="t" style="left:482.0px;top:109px;font-size:10px;color:#f0f0f0;font-weight:normal;letter-spacing:0.000px;transform:scaleX(0.8853);transform-origin:0 0;">Override Height</div>
<svg class="a" style="left:603px;top:106px;" width="12" height="12" viewBox="0 0 12 12"><rect x="0" y="0" width="12" height="12" fill="#000"/><rect x="2" y="2" width="4" height="4" fill="#fff"/><rect x="6" y="6" width="4" height="4" fill="#fff"/></svg>
<svg class="a" style="left:623px;top:107px;" width="9" height="12" viewBox="0 0 9 12"><path d="M4.5 0 L9 5 H0Z M4.5 12 L9 7 H0Z" fill="#a0a0a0"/></svg>
<svg class="a" style="left:641px;top:104px;" width="17" height="16" viewBox="0 0 17 16"><circle cx="10.5" cy="6.5" r="5.8" fill="none" stroke="#a0a0a0" stroke-width="1.1"/><path d="M6.5 10.5L1 16" stroke="#a0a0a0" stroke-width="1.2"/><path d="M10.5 3.5V9.5M7.5 6.5H13.5" stroke="#a0a0a0" stroke-width="1.2"/></svg>
<svg class="a" style="left:665px;top:104px;" width="17" height="16" viewBox="0 0 17 16"><circle cx="10.5" cy="6.5" r="5.8" fill="none" stroke="#a0a0a0" stroke-width="1.1"/><path d="M6.5 10.5L1 16" stroke="#a0a0a0" stroke-width="1.2"/><path d="M7.5 6.5H13.5" stroke="#a0a0a0" stroke-width="1.2"/></svg>
<div class="t" style="left:690.0px;top:107px;font-size:12px;color:#e6e6e6;font-weight:normal;letter-spacing:-0.348px;">66</div>
<div class="t" style="left:706.0px;top:107px;font-size:12px;color:#e6e6e6;font-weight:normal;letter-spacing:-1.670px;">%</div>
<svg class="a" style="left:753px;top:107px;" width="9" height="12" viewBox="0 0 9 12"><path d="M4.5 0 L9 5 H0Z M4.5 12 L9 7 H0Z" fill="#a0a0a0"/></svg>
<svg class="a" style="left:770px;top:104px;" width="17" height="16" viewBox="0 0 17 16"><circle cx="10.5" cy="6.5" r="5.8" fill="none" stroke="#a0a0a0" stroke-width="1.1"/><path d="M6.5 10.5L1 16" stroke="#a0a0a0" stroke-width="1.2"/><path d="M8 4L13 9M13 4L8 9" stroke="#a0a0a0" stroke-width="1.2"/></svg>
<svg class="a" style="left:794px;top:104px;" width="17" height="16" viewBox="0 0 17 16"><circle cx="10.5" cy="6.5" r="5.8" fill="none" stroke="#a0a0a0" stroke-width="1.1"/><path d="M6.5 10.5L1 16" stroke="#a0a0a0" stroke-width="1.2"/><path d="M7.5 5V3.5H9M12 3.5H13.5V5M13.5 8V9.5H12M9 9.5H7.5V8" fill="none" stroke="#a0a0a0"/></svg>
<svg class="a" style="left:820px;top:107px;" width="12" height="11" viewBox="0 0 12 11"><path d="M2 3.5A5 5 0 1 1 2.5 8" fill="none" stroke="#a0a0a0" stroke-width="1.2"/><path d="M0 1L4 1L3 5Z" fill="#a0a0a0"/></svg>
<div class="a" style="left:285px;top:210px;width:529px;height:396px;background:#000;"></div>
<div class="a" style="left:284px;top:209px;width:134px;height:134px;background:#fff;border:2px solid #d5279b"></div>
<div class="a" style="left:284px;top:191px;width:73px;height:20px;background:#d5279b;border-radius:3px 3px 0 0"></div>
<svg class="a" style="left:288px;top:195px;" width="11" height="11" viewBox="0 0 11 11"><path d="M0.5 9V0.5H9" fill="none" stroke="#f090c8"/><rect x="2" y="2" width="6" height="6" fill="#e868b4"/><path d="M5 4L10.5 8.5H8L9.5 11L8.5 11.5L7 9L5 10.5Z" fill="#f4a8d6"/></svg>
<div class="t" style="left:303.0px;top:197px;font-size:12px;color:#fff;font-weight:normal;letter-spacing:-0.171px;">rectangle</div>
<div class="a" style="left:282px;top:207px;width:6px;height:6px;background:#fff;border:1px solid #d5279b"></div>
<div class="a" style="left:282px;top:273px;width:6px;height:6px;background:#fff;border:1px solid #d5279b"></div>
<div class="a" style="left:282px;top:339px;width:6px;height:6px;background:#fff;border:1px solid #d5279b"></div>
<div class="a" style="left:348px;top:207px;width:6px;height:6px;background:#fff;border:1px solid #d5279b"></div>
<div class="a" style="left:348px;top:339px;width:6px;height:6px;background:#fff;border:1px solid #d5279b"></div>
<div class="a" style="left:414px;top:207px;width:6px;height:6px;background:#fff;border:1px solid #d5279b"></div>
<div class="a" style="left:414px;top:273px;width:6px;height:6px;background:#fff;border:1px solid #d5279b"></div>
<div class="a" style="left:414px;top:339px;width:6px;height:6px;background:#fff;border:1px solid #d5279b"></div>
<div class="t" style="left:535.0px;top:401px;font-size:14px;color:#e8e8e8;font-weight:normal;letter-spacing:0.000px;transform:scaleX(0.7424);transform-origin:0 0;">LED1</div>
<div class="a" style="left:840px;top:100px;width:394px;height:603px;background:#2e2f30;"></div>
<div class="a" style="left:1234px;top:100px;width:10px;height:603px;background:#3f3f3f;"></div>
<div class="a" style="left:1234px;top:264px;width:10px;height:423px;background:#505050;"></div>
<div class="a" style="left:969px;top:100px;width:29px;height:21px;border:1px solid #1c1c1c;background:transparent;border-top:none"></div>
<svg class="a" style="left:978px;top:101px;" width="12" height="12" viewBox="0 0 12 12"><path d="M6 0V11M0.5 5.5H11.5" stroke="#fff" stroke-width="1.8"/></svg>
<div class="a" style="left:840px;top:131px;width:394px;height:21px;background:#1f1f1f;"></div>
<svg class="a" style="left:844px;top:140px;" width="8" height="5" viewBox="0 0 8 5"><path d="M0 0H8L4 4.5Z" fill="#b0b0b0"/></svg>
<div class="t" style="left:862.0px;top:137px;font-size:12px;color:#f0f0f0;font-weight:normal;letter-spacing:0.000px;transform:scaleX(0.9104);transform-origin:0 0;">GEOMETRY - 2D</div>
<div class="t" style="left:886.0px;top:172px;font-size:12px;color:#f0f0f0;font-weight:normal;letter-spacing:-0.242px;">Position</div>
<div class="a" style="left:969px;top:162px;width:85px;height:29px;border:1px solid #1c1c1c;background:#2c2d2e;"></div>
<div class="t" style="left:1041.3px;top:172px;font-size:12px;color:#f0f0f0;font-weight:normal;letter-spacing:-0.674px;">0</div>
<div class="t" style="left:1063.0px;top:173px;font-size:12px;color:#f0f0f0;font-weight:normal;letter-spacing:-0.004px;">X</div>
<div class="a" style="left:1100px;top:162px;width:85px;height:29px;border:1px solid #1c1c1c;background:#2c2d2e;"></div>
<div class="t" style="left:1172.3px;top:172px;font-size:12px;color:#f0f0f0;font-weight:normal;letter-spacing:-0.674px;">0</div>
<div class="t" style="left:1194.0px;top:173px;font-size:12px;color:#f0f0f0;font-weight:normal;letter-spacing:-0.004px;">Y</div>
<div class="t" style="left:908.0px;top:206px;font-size:12px;color:#f0f0f0;font-weight:normal;letter-spacing:0.000px;transform:scaleX(0.8139);transform-origin:0 0;">Size</div>
<div class="a" style="left:969px;top:196px;width:85px;height:29px;border:1px solid #1c1c1c;background:#2c2d2e;"></div>
<div class="t" style="left:1029.0px;top:206px;font-size:12px;color:#2aafd3;font-weight:normal;letter-spacing:0.000px;transform:scaleX(0.9490);transform-origin:0 0;">200</div>
<div class="t" style="left:1063.0px;top:207px;font-size:12px;color:#f0f0f0;font-weight:normal;letter-spacing:-0.326px;">W</div>
<div class="a" style="left:1100px;top:196px;width:85px;height:29px;border:1px solid #1c1c1c;background:#2c2d2e;"></div>
<div class="t" style="left:1160.0px;top:206px;font-size:12px;color:#2aafd3;font-weight:normal;letter-spacing:0.000px;transform:scaleX(0.9490);transform-origin:0 0;">200</div>
<div class="t" style="left:1194.0px;top:207px;font-size:12px;color:#f0f0f0;font-weight:normal;letter-spacing:-0.666px;">H</div>
<div class="t" style="left:883.0px;top:240px;font-size:12px;color:#7c7c7c;font-weight:normal;letter-spacing:-0.099px;text-decoration:line-through">Rotation</div>
<div class="a" style="left:969px;top:230px;width:85px;height:29px;border:1px solid #5e5e5e;background:#2c2d2e;"></div>
<div class="t" style="left:1028.0px;top:240px;font-size:12px;color:#7c7c7c;font-weight:normal;letter-spacing:0.000px;transform:scaleX(0.8563);transform-origin:0 0;">0.00</div>
<div class="t" style="left:1064.0px;top:240px;font-size:10px;color:#7c7c7c;font-weight:normal;letter-spacing:0.001px;">°</div>
<div class="t" style="left:900.0px;top:274px;font-size:12px;color:#7c7c7c;font-weight:normal;letter-spacing:0.000px;transform:scaleX(0.8995);transform-origin:0 0;text-decoration:line-through">Scale</div>
<div class="a" style="left:969px;top:264px;width:216px;height:29px;border:1px solid #5e5e5e;background:#2c2d2e;"></div>
<div class="t" style="left:1130.0px;top:275px;font-size:12px;color:#7c7c7c;font-weight:normal;letter-spacing:0.000px;transform:scaleX(0.8563);transform-origin:0 0;">1.00</div>
<svg class="a" style="left:1163px;top:274px;" width="14" height="8" viewBox="0 0 14 8"><path d="M0.5 0.5L7 7L13.5 0.5" fill="none" stroke="#7c7c7c" stroke-width="1.3"/></svg>
<div class="t" style="left:1192.0px;top:275px;font-size:12px;color:#7c7c7c;font-weight:normal;letter-spacing:-0.670px;">%</div>
<div class="t" style="left:890.0px;top:308px;font-size:12px;color:#f0f0f0;font-weight:normal;letter-spacing:-0.279px;">Z stack</div>
<div class="a" style="left:969px;top:298px;width:85px;height:29px;border:1px solid #1c1c1c;background:#2c2d2e;"></div>
<div class="t" style="left:1041.3px;top:308px;font-size:12px;color:#f0f0f0;font-weight:normal;letter-spacing:-0.674px;">0</div>
<div class="t" style="left:895.0px;top:342px;font-size:12px;color:#7c7c7c;font-weight:normal;letter-spacing:-0.002px;text-decoration:line-through">Origin</div>
<div class="a" style="left:969px;top:332px;width:29px;height:29px;border:1px solid #5e5e5e;background:transparent;"></div>
<div class="a" style="left:979px;top:342px;width:9px;height:9px;background:#8a8a8a;"></div>
<div class="a" style="left:840px;top:371px;width:394px;height:21px;background:#1f1f1f;"></div>
<svg class="a" style="left:844px;top:380px;" width="8" height="5" viewBox="0 0 8 5"><path d="M0 0H8L4 4.5Z" fill="#b0b0b0"/></svg>
<div class="t" style="left:862.0px;top:377px;font-size:12px;color:#f0f0f0;font-weight:normal;letter-spacing:0.000px;transform:scaleX(0.8592);transform-origin:0 0;">VISIBILITY</div>
<div class="t" style="left:884.0px;top:412px;font-size:12px;color:#f0f0f0;font-weight:normal;letter-spacing:-0.014px;">Visibility</div>
<div class="a" style="left:969px;top:402px;width:29px;height:29px;border:1px solid #1c1c1c;background:transparent;"></div>
<svg class="a" style="left:977px;top:411px;" width="14" height="11" viewBox="0 0 14 11"><path d="M1 5.5L5 9.5L13 1" fill="none" stroke="#fff" stroke-width="1.8"/></svg>
<div class="t" style="left:1004.0px;top:412px;font-size:12px;color:#f0f0f0;font-weight:normal;letter-spacing:-0.189px;">Visible</div>
<div class="a" style="left:1100px;top:402px;width:29px;height:29px;border:1px solid #1c1c1c;background:transparent;"></div>
<div class="t" style="left:1135.0px;top:412px;font-size:12px;color:#f0f0f0;font-weight:normal;letter-spacing:-0.224px;">Clip</div>
<div class="t" style="left:886.0px;top:446px;font-size:12px;color:#f0f0f0;font-weight:normal;letter-spacing:0.053px;">Opacity</div>
<div class="a" style="left:969px;top:436px;width:216px;height:29px;border:1px solid #1c1c1c;background:#2c2d2e;"></div>
<div class="t" style="left:1129.0px;top:446px;font-size:12px;color:#f0f0f0;font-weight:normal;letter-spacing:0.000px;transform:scaleX(0.8991);transform-origin:0 0;">1.00</div>
<svg class="a" style="left:1163px;top:446px;" width="14" height="9" viewBox="0 0 14 9"><path d="M0.5 0.5L7 7.5L13.5 0.5" fill="none" stroke="#fff" stroke-width="1.3"/></svg>
<div class="a" style="left:840px;top:479px;width:203px;height:24px;background:#2aafd3;"></div>
<div class="t" style="left:915.0px;top:486px;font-size:12px;color:#203a44;font-weight:normal;letter-spacing:-0.254px;">Rectangle</div>
<div class="a" style="left:1042px;top:479px;width:192px;height:24px;border:1px solid #2aafd3;background:transparent;border-right:none"></div>
<div class="t" style="left:1125.0px;top:486px;font-size:12px;color:#2aafd3;font-weight:normal;letter-spacing:-0.006px;">Layout</div>
<div class="a" style="left:840px;top:503px;width:394px;height:21px;background:#1f1f1f;"></div>
<svg class="a" style="left:844px;top:512px;" width="8" height="5" viewBox="0 0 8 5"><path d="M0 0H8L4 4.5Z" fill="#b0b0b0"/></svg>
<div class="t" style="left:862.0px;top:509px;font-size:12px;color:#f0f0f0;font-weight:normal;letter-spacing:0.000px;transform:scaleX(0.8419);transform-origin:0 0;">RECTANGLE</div>
<div class="t" style="left:883.0px;top:544px;font-size:12px;color:#f0f0f0;font-weight:normal;letter-spacing:-0.075px;">Fill color</div>
<div class="a" style="left:969px;top:534px;width:85px;height:29px;border:1px solid #1c1c1c;background:#fff;"></div>
<div class="a" style="left:1100px;top:534px;width:85px;height:29px;border:1px solid #1c1c1c;background:#2c2d2e;"></div>
<div class="t" style="left:1106.0px;top:544px;font-size:12px;color:#f0f0f0;font-weight:normal;letter-spacing:1.068px;">#ffffff</div>
<div class="t" style="left:860.0px;top:578px;font-size:12px;color:#7c7c7c;font-weight:normal;letter-spacing:-0.033px;text-decoration:line-through">Border width</div>
<div class="a" style="left:969px;top:568px;width:85px;height:29px;border:1px solid #5e5e5e;background:#2c2d2e;"></div>
<div class="t" style="left:1041.3px;top:578px;font-size:12px;color:#7c7c7c;font-weight:normal;letter-spacing:-1.674px;">1</div>
<div class="t" style="left:893.0px;top:612px;font-size:12px;color:#f0f0f0;font-weight:normal;letter-spacing:0.000px;transform:scaleX(0.9102);transform-origin:0 0;">Radius</div>
<div class="a" style="left:969px;top:602px;width:85px;height:29px;border:1px solid #1c1c1c;background:#2c2d2e;"></div>
<div class="t" style="left:1041.3px;top:612px;font-size:12px;color:#f0f0f0;font-weight:normal;letter-spacing:-0.674px;">0</div>
<div class="a" style="left:840px;top:641px;width:394px;height:21px;background:#1f1f1f;"></div>
<svg class="a" style="left:845px;top:648px;" width="5" height="8" viewBox="0 0 5 8"><path d="M0 0V8L4.5 4Z" fill="#b0b0b0"/></svg>
<div class="t" style="left:862.0px;top:647px;font-size:12px;color:#f0f0f0;font-weight:normal;letter-spacing:0.000px;transform:scaleX(0.9272);transform-origin:0 0;">ADVANCED</div>
<div class="a" style="left:40px;top:703px;width:1204px;height:27px;background:#1f1f1f;"></div>
<svg class="a" style="left:48px;top:712px;" width="11" height="12" viewBox="0 0 11 12"><rect x="0.5" y="0.5" width="10" height="11" fill="none" stroke="#7a7a7a"/><rect x="1" y="1" width="4" height="10" fill="#7a7a7a"/></svg>
<div class="a" style="left:72px;top:707px;width:200px;height:22px;background:#262626;"></div>
<svg class="a" style="left:78px;top:712px;" width="17" height="13" viewBox="0 0 17 13"><circle cx="10" cy="5" r="4.2" fill="none" stroke="#9a9a9a" stroke-width="1.3"/><path d="M7 8L1.5 13" stroke="#9a9a9a" stroke-width="1.6"/><path d="M13 11H17L15 13Z" fill="#9a9a9a"/></svg>
<div class="t" style="left:99.0px;top:713px;font-size:12px;color:#8a8a8a;font-weight:normal;letter-spacing:-0.123px;">Type to locate (Ctrl+K)</div>
<div class="a" style="left:275px;top:707px;width:1px;height:20px;background:#4a4a4a;"></div>
<div class="t" style="left:286.0px;top:713px;font-size:12px;color:#e0e0e0;font-weight:normal;letter-spacing:-0.674px;">1</div>
<div class="t" style="left:299.0px;top:713px;font-size:12px;color:#e0e0e0;font-weight:normal;letter-spacing:0.000px;transform:scaleX(0.8650);transform-origin:0 0;">Issues</div>
<div class="t" style="left:347.0px;top:713px;font-size:12px;color:#e0e0e0;font-weight:normal;letter-spacing:-0.674px;">2</div>
<div class="t" style="left:362.0px;top:713px;font-size:12px;color:#e0e0e0;font-weight:normal;letter-spacing:0.000px;transform:scaleX(0.9094);transform-origin:0 0;">Search Results</div>
<div class="t" style="left:453.0px;top:713px;font-size:12px;color:#e0e0e0;font-weight:normal;letter-spacing:-0.674px;">3</div>
<div class="t" style="left:467.0px;top:713px;font-size:12px;color:#e0e0e0;font-weight:normal;letter-spacing:0.232px;">Application Output</div>
<div class="t" style="left:586.0px;top:713px;font-size:12px;color:#e0e0e0;font-weight:normal;letter-spacing:-0.674px;">5</div>
<div class="t" style="left:601.0px;top:713px;font-size:12px;color:#e0e0e0;font-weight:normal;letter-spacing:-0.232px;">QML Debugger Console</div>
<svg class="a" style="left:746px;top:713px;" width="9" height="12" viewBox="0 0 9 12"><path d="M4.5 0 L9 5 H0Z M4.5 12 L9 7 H0Z" fill="#a0a0a0"/></svg>
<div class="a" style="left:1166px;top:707px;width:24px;height:21px;background:#131313;"></div>
<svg class="a" style="left:1171px;top:710px;" width="15" height="12" viewBox="0 0 15 12"><path d="M9 3L11.5 0L14 3Z" fill="#d0d0d0"/><rect x="0.5" y="6.5" width="14" height="5" rx="2.5" fill="#2a2a2a" stroke="#c8c8c8"/><rect x="2" y="8" width="8" height="2" fill="#8a8a8a"/></svg>
<svg class="a" style="left:1203px;top:712px;" width="11" height="11" viewBox="0 0 11 11"><rect x="0.5" y="0.5" width="10" height="10" fill="none" stroke="#8a8a8a"/><rect x="6" y="1" width="4" height="9" fill="#8a8a8a"/></svg>
<svg class="a" style="left:1228px;top:714px;" width="16" height="16" viewBox="0 0 16 16"><path d="M15 1L1 15M15 5L5 15M15 9L9 15M15 13L13 15" stroke="#3c3c3c" stroke-width="1"/></svg>
<svg class="a" style="left:164px;top:612px" width="72" height="92" viewBox="164 612 72 92">
<path d="M186 617H198V636H206V640H216V645H224V649H230V679H227V690H224V699H187V690H184V683H181V676H178V669H175V663H171V657H168V650H186Z" fill="#fff" stroke="#000" stroke-width="3" stroke-linejoin="miter"/>
<path d="M198 636V654M207 640V656M217 645V659M188 650V667" stroke="#000" stroke-width="3"/>
</svg>
</body></html>
